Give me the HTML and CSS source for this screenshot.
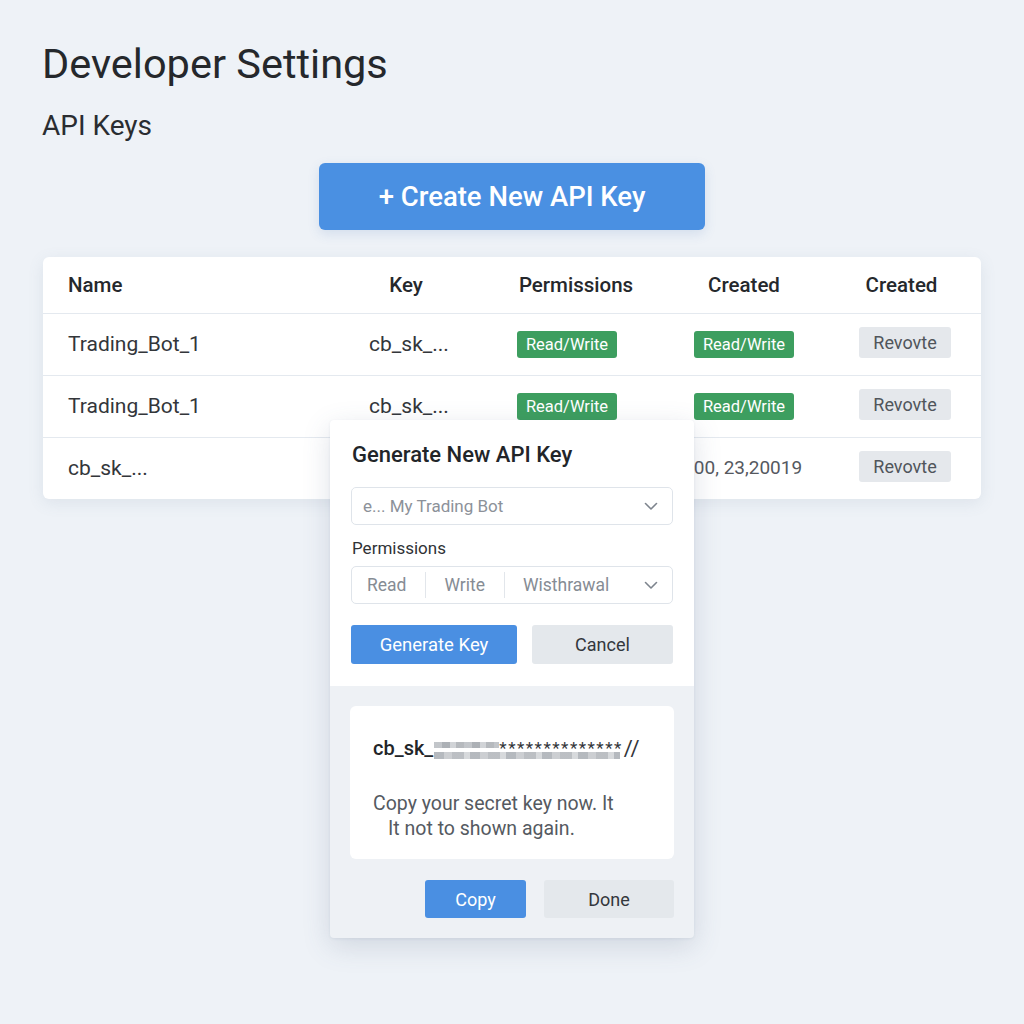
FILE: index.html
```html
<!DOCTYPE html>
<html lang="en">
<head>
<meta charset="utf-8">
<title>Developer Settings</title>
<link rel="stylesheet" href="styles.css">
</head>
<body>
<main class="page">
  <h1 class="title">Developer Settings</h1>
  <h2 class="subtitle">API Keys</h2>
  <div class="create-wrap">
    <button class="create-btn">+ Create New API Key</button>
  </div>

  <section class="table">
    <div class="row head">
      <div class="cell name">Name</div>
      <div class="cell center">Key</div>
      <div class="cell center">Permissions</div>
      <div class="cell center">Created</div>
      <div class="cell center">Created</div>
    </div>
    <div class="row">
      <div class="cell name">Trading_Bot_1</div>
      <div class="cell center key">cb_sk_...</div>
      <div class="cell center"><span class="badge shift">Read/Write</span></div>
      <div class="cell center"><span class="badge">Read/Write</span></div>
      <div class="cell center"><button class="revoke">Revovte</button></div>
    </div>
    <div class="row">
      <div class="cell name">Trading_Bot_1</div>
      <div class="cell center key">cb_sk_...</div>
      <div class="cell center"><span class="badge shift">Read/Write</span></div>
      <div class="cell center"><span class="badge">Read/Write</span></div>
      <div class="cell center"><button class="revoke">Revovte</button></div>
    </div>
    <div class="row last">
      <div class="cell name">cb_sk_...</div>
      <div class="cell center key"></div>
      <div class="cell center"></div>
      <div class="cell center date">00, 23,20019</div>
      <div class="cell center"><button class="revoke">Revovte</button></div>
    </div>
  </section>

  <div class="modal">
    <div class="modal-top">
      <h3 class="modal-title">Generate New API Key</h3>
      <div class="field">
        <span class="placeholder">e... My Trading Bot</span>
        <svg class="chev" width="14" height="9" viewBox="0 0 14 9"><path d="M1.5 1.5 L7 7 L12.5 1.5" fill="none" stroke="#7d848d" stroke-width="1.6" stroke-linecap="round" stroke-linejoin="round"/></svg>
      </div>
      <div class="label">Permissions</div>
      <div class="field perms">
        <span class="seg">Read</span>
        <span class="divider"></span>
        <span class="seg">Write</span>
        <span class="divider"></span>
        <span class="seg grow">Wisthrawal</span>
        <svg class="chev" width="14" height="9" viewBox="0 0 14 9"><path d="M1.5 1.5 L7 7 L12.5 1.5" fill="none" stroke="#7d848d" stroke-width="1.6" stroke-linecap="round" stroke-linejoin="round"/></svg>
      </div>
      <div class="actions">
        <button class="btn primary gen">Generate Key</button>
        <button class="btn secondary cancel">Cancel</button>
      </div>
    </div>
    <div class="modal-bottom">
      <div class="secret-card">
        <div class="secret">
          <span class="prefix">cb_sk_</span>
          <span class="masked">
            <span class="mline"><span class="blur b1"></span><span class="stars">**************</span></span>
            <span class="mline"><span class="blur b2"></span></span>
          </span>
          <span class="slashes">//</span>
        </div>
        <p class="note">Copy your secret key now. It<br><span class="indent">It not to shown again.</span></p>
      </div>
      <div class="actions right">
        <button class="btn primary copy">Copy</button>
        <button class="btn secondary done">Done</button>
      </div>
    </div>
  </div>
</main>
</body>
</html>
```

FILE: styles.css
```css
* { box-sizing: border-box; }
html, body { margin: 0; padding: 0; }
body {
  background: #eef2f7;
  font-family: Roboto, "Liberation Sans", sans-serif;
  color: #2a2d31;
  width: 1024px;
  height: 1024px;
  overflow: hidden;
}
.page {
  position: relative;
  padding: 40px 43px 0 42px;
}
.title {
  margin: 0;
  font-size: 41.5px;
  line-height: 48px;
  font-weight: 400;
  color: #25282c;
}
.subtitle {
  margin: 23px 0 0;
  font-size: 28px;
  line-height: 30px;
  font-weight: 400;
  color: #2a2d31;
}
.create-wrap {
  display: flex;
  justify-content: center;
  margin-top: 22px;
  padding-left: 1px;
}
.create-btn {
  width: 386px;
  height: 67px;
  border: none;
  border-radius: 6px;
  background: #4a90e2;
  color: #fff;
  font-family: inherit;
  font-size: 27.5px;
  font-weight: 500;
  box-shadow: 0 4px 12px rgba(60, 110, 180, 0.15);
}
.table {
  margin-top: 27px;
  margin-left: 1px;
  width: 938px;
  background: #fff;
  border-radius: 6px;
  box-shadow: 0 4px 16px rgba(100, 120, 150, 0.12);
}
.row {
  display: grid;
  grid-template-columns: 283px 160px 180px 156px 159px;
  height: 62px;
  align-items: center;
  border-top: 1px solid #e4e9ef;
  font-size: 21px;
  color: #33363a;
}
.row.head {
  height: 56px;
  border-top: none;
  font-size: 20.5px;
  font-weight: 500;
  color: #25282c;
}
.cell.name { padding-left: 25px; }
.cell.center { display: flex; justify-content: center; }
.cell.key { padding-left: 6px; margin-top: -2px; }
.row .cell.name { margin-top: -2px; }
.row.head .cell.name { margin-top: 0; }
.badge {
  display: inline-block;
  background: #3d9e5f;
  color: #fff;
  font-size: 16.5px;
  line-height: 27px;
  height: 27px;
  width: 100px;
  text-align: center;
  border-radius: 3px;
}
.badge.shift { margin-right: 18px; }
.revoke {
  width: 92px;
  height: 31px;
  border: none;
  border-radius: 3px;
  background: #e5e8ec;
  color: #50555b;
  font-family: inherit;
  font-size: 18px;
  margin-left: 7px;
  margin-top: -4px;
}
.date { color: #55595f; font-size: 19px; padding-left: 8px; margin-top: -2px; }

.modal {
  position: absolute;
  left: 330px;
  top: 420px;
  width: 364px;
  background: #eef1f5;
  border-radius: 4px;
  box-shadow: 0 8px 28px rgba(70, 90, 120, 0.18), 0 1px 3px rgba(70, 90, 120, 0.08);
  overflow: hidden;
}
.modal-top {
  background: #fff;
  padding: 22px 21px 22px 21px;
}
.modal-title {
  margin: 0 0 0 1px;
  font-size: 22px;
  line-height: 26px;
  font-weight: 500;
  color: #222529;
}
.field {
  display: flex;
  align-items: center;
  height: 38px;
  margin-top: 19px;
  border: 1.5px solid #dfe4ea;
  border-radius: 5px;
  padding: 0 14px 0 11px;
}
.placeholder {
  flex: 1;
  font-size: 17px;
  color: #8c9199;
}
.chev { flex: none; }
.label {
  margin-top: 13px;
  font-size: 17px;
  line-height: 20px;
  color: #2f3236;
  padding-left: 1px;
}
.field.perms {
  margin-top: 8px;
  height: 38px;
  padding-left: 15px;
}
.seg {
  font-size: 17.5px;
  color: #868c94;
}
.seg.grow { flex: 1; }
.divider {
  width: 1px;
  height: 26px;
  background: #e2e6eb;
  margin: 0 18px 0 19px;
}
.actions {
  display: flex;
  gap: 15px;
  margin-top: 21px;
}
.actions.right {
  justify-content: flex-end;
  gap: 18px;
  margin-top: 21px;
}
.btn {
  border: none;
  border-radius: 3px;
  font-family: inherit;
  font-size: 18px;
  height: 39px;
}
.btn.primary { background: #4a8fe2; color: #fff; }
.btn.secondary { background: #e4e8ec; color: #33373c; }
.btn.gen { width: 166px; font-size: 18.5px; }
.btn.cancel { width: 141px; }
.btn.copy { width: 101px; height: 38px; }
.btn.done { width: 130px; height: 38px; }

.modal-bottom {
  padding: 20px 20px 20px 20px;
}
.secret-card {
  background: #fff;
  border-radius: 6px;
  height: 153px;
  padding: 30px 20px 0 23px;
}
.secret {
  display: flex;
  align-items: center;
  height: 24px;
}
.prefix {
  font-size: 20px;
  font-weight: 500;
  color: #222529;
}
.masked {
  display: flex;
  flex-direction: column;
  gap: 3px;
  margin-left: 1px;
  padding-top: 4px;
}
.mline { display: flex; align-items: center; height: 8px; }
.blur {
  display: inline-block;
  height: 6px;
  background: repeating-linear-gradient(90deg, #b7bbc0 0 8px, #9ea3a9 8px 16px, #c9ccd0 16px 22px, #a9adb2 22px 30px);
  opacity: 0.85;
}
.blur.b1 { width: 65px; }
.blur.b2 { width: 186px; height: 7px; background: repeating-linear-gradient(90deg, #a8adb3 0 10px, #c3c6ca 10px 18px, #b0b4b9 18px 30px, #d0d3d6 30px 36px); }
.stars {
  font-size: 17px;
  line-height: 8px;
  letter-spacing: 1.5px;
  color: #33363a;
  padding-top: 7px;
}
.slashes {
  font-size: 22px;
  color: #33363a;
  margin-left: 1px;
}
.note {
  margin: 31px 0 0;
  font-size: 19.5px;
  line-height: 25px;
  color: #555a61;
}
.indent { padding-left: 15px; }
```
